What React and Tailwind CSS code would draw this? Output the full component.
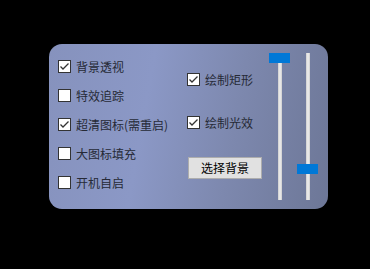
const Check = ({ checked, label }) => (
  <div className="flex items-center h-[13px] gap-[5px]">
    <div className="w-[13px] h-[13px] bg-white border border-[#333333] flex items-center justify-center shrink-0">
      {checked && (
        <svg width="11" height="11" viewBox="0 0 11 11">
          <path d="M1.5 5.5 L4 8 L9.5 2.5" fill="none" stroke="#333333" strokeWidth="1.3" />
        </svg>
      )}
    </div>
    <span className="text-[12px] leading-none text-[#262a36] whitespace-nowrap">{label}</span>
  </div>
);

const Slider = ({ thumbTop }) => (
  <div className="relative w-[21px] h-[147px] flex justify-center">
    <div className="w-[4px] h-full bg-[#e7e7e7] border-x border-[#d6d6d6]" />
    <div
      className="absolute left-0 w-[21px] h-[10px] bg-[#0078d7]"
      style={{ top: thumbTop }}
    />
  </div>
);

export default function App() {
  return (
    <div
      className="w-[370px] h-[269px] bg-black pt-[44px] pl-[49px]"
      style={{ fontFamily: '"Microsoft YaHei", "Noto Sans CJK SC", "Noto Sans", sans-serif' }}
    >
      <div className="w-[279px] h-[165px] rounded-[13px] bg-[linear-gradient(100deg,#8692bd_0%,#8b98c6_35%,#7d88ae_65%,#6d7797_100%)] flex pl-[9px]">
        <div className="w-[129px] pt-[16px] flex flex-col gap-[16px]">
          <Check checked label="背景透视" />
          <Check label="特效追踪" />
          <Check checked label="超清图标(需重启)" />
          <Check label="大图标填充" />
          <Check label="开机自启" />
        </div>
        <div className="w-[82px] pt-[29px] flex flex-col">
          <Check checked label="绘制矩形" />
          <div className="mt-[30px]">
            <Check checked label="绘制光效" />
          </div>
          <button className="mt-[28px] ml-[1px] w-[74px] h-[22px] bg-[#e1e1e1] border border-[#adadad] text-[12px] text-black leading-none flex items-center justify-center">
            选择背景
          </button>
        </div>
        <div className="pt-[9px] flex gap-[7px]">
          <Slider thumbTop={0} />
          <Slider thumbTop={111} />
        </div>
      </div>
    </div>
  );
}
